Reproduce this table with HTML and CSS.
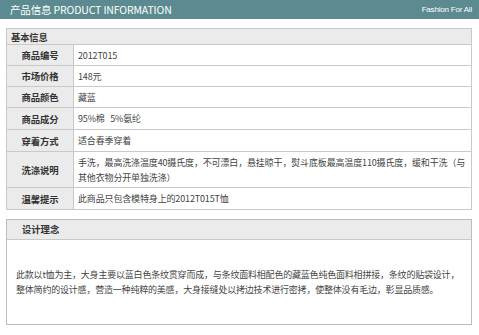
FILE: index.html
```html
<!DOCTYPE html>
<html lang="zh">
<head>
<meta charset="utf-8">
<title>产品信息</title>
<link rel="stylesheet" href="styles.css">
</head>
<body>
<div class="page">
  <header class="topbar">
    <span class="title">产品信息 PRODUCT INFORMATION</span>
    <span class="slogan">Fashion For All</span>
  </header>

  <table class="info">
    <tr><th class="head" colspan="2">基本信息</th></tr>
    <tr class="r"><td class="lbl">商品编号</td><td class="val">2012T015</td></tr>
    <tr class="r"><td class="lbl">市场价格</td><td class="val">148元</td></tr>
    <tr class="r"><td class="lbl">商品颜色</td><td class="val">藏蓝</td></tr>
    <tr class="r2"><td class="lbl">商品成分</td><td class="val">95%棉&nbsp;&nbsp;&nbsp;5%氨纶</td></tr>
    <tr class="r2"><td class="lbl">穿着方式</td><td class="val">适合春季穿着</td></tr>
    <tr class="rw"><td class="lbl">洗涤说明</td><td class="val multi">手洗，最高洗涤温度40摄氏度，不可漂白，悬挂晾干，熨斗底板最高温度110摄氏度，缓和干洗（与<br>其他衣物分开单独洗涤）</td></tr>
    <tr class="r2"><td class="lbl">温馨提示</td><td class="val">此商品只包含模特身上的2012T015T恤</td></tr>
  </table>

  <section class="design">
    <div class="design-head">设计理念</div>
    <div class="design-body">
      <p>此款以t恤为主，大身主要以蓝白色条纹贯穿而成，与条纹面料相配色的藏蓝色纯色面料相拼接，条纹的贴袋设计，<br>整体简约的设计感，营造一种纯粹的美感，大身接缝处以拷边技术进行密拷，使整体没有毛边，彰显品质感。</p>
    </div>
  </section>
</div>
</body>
</html>
```

FILE: styles.css
```css
* { box-sizing: border-box; }
html, body { margin: 0; padding: 0; background: #ffffff; }
body {
  font-family: "Noto Sans CJK SC", "Noto Sans", sans-serif;
  color: #3a3a3a;
  width: 479px;
  height: 335px;
  overflow: hidden;
}
.page { width: 479px; }

.topbar {
  height: 19px;
  background: #5b8b90;
  display: flex;
  align-items: center;
  justify-content: space-between;
  padding: 0 7px 0 10px;
  color: #ffffff;
}
.title { font-size: 10.5px; letter-spacing: -0.15px; line-height: 19px; }
.slogan { font-family: "Liberation Sans", Arial, sans-serif; font-size: 8px; letter-spacing: -0.2px; line-height: 19px; }

.info {
  margin: 9px 0 0 6px;
  width: 466px;
  border-collapse: collapse;
  border: 1px solid #bdbdbd;
  font-size: 9px;
  letter-spacing: -0.15px;
}
.info td, .info th { border: 1px solid #c9c9c9; padding: 0; }
.head {
  height: 16px;
  background: #ebebeb;
  text-align: left;
  font-weight: bold;
  font-size: 9.3px;
  padding-left: 4px !important;
  color: #333;
  line-height: 14px;
}
.lbl {
  width: 67px;
  background: #ebebeb;
  text-align: center;
  font-weight: bold;
  font-size: 9.4px;
  color: #333;
}
.val { padding-left: 4px !important; color: #444; }
.r td { height: 21px; }
.r2 td { height: 22px; }
.rw td { height: 36px; }
.multi { line-height: 15px; }

.design {
  margin: 9px 0 0 6px;
  width: 466px;
  border: 1px solid #bdbdbd;
}
.design-head {
  height: 20px;
  background: #ebebeb;
  border-bottom: 1px solid #c9c9c9;
  font-size: 9.3px;
  font-weight: bold;
  line-height: 19px;
  padding-left: 15px;
  color: #333;
}
.design-body {
  height: 84px;
  display: flex;
  align-items: center;
  padding: 0 9px 0 9px;
}
.design-body p {
  margin: 0;
  font-size: 9px;
  letter-spacing: -0.2px;
  line-height: 15px;
  color: #444;
  white-space: nowrap;
}
```
